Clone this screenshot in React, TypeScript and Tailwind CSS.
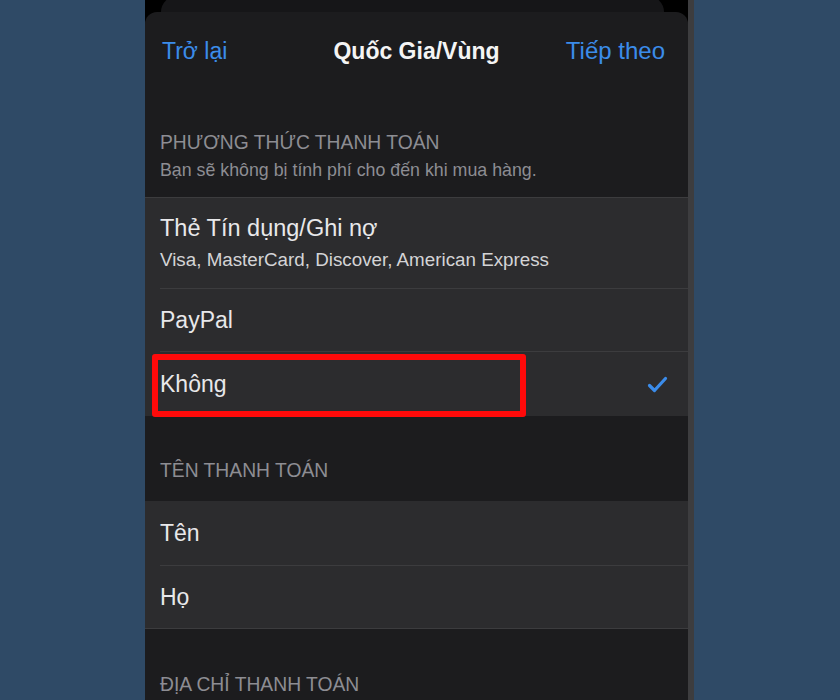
import React from 'react';

const font = { fontFamily: '"Liberation Sans", Arial, sans-serif' };

function Check(): React.ReactElement {
  return (
    <svg width="21" height="17" viewBox="0 0 21 17" fill="none">
      <path d="M2.5 9.5 L7.5 14.5 L18.5 2.5" stroke="#3b8cea" strokeWidth="3.2" strokeLinecap="round" strokeLinejoin="round" />
    </svg>
  );
}

interface RowProps {
  readonly label: string;
  readonly h: string;
  readonly last?: boolean;
  readonly children?: React.ReactNode;
}

function Row({ label, h, last, children }: RowProps): React.ReactElement {
  return (
    <div className="bg-[#2c2c2e] pl-[15px]">
      <div className={`flex items-center pr-[20px] ${h} ${last ? '' : 'border-b border-[#3c3c3e]'}`}>
        <span className="flex-1 text-[23px] leading-[28px] text-[#e8e8ea]">{label}</span>
        {children}
      </div>
    </div>
  );
}

export default function App(): React.ReactElement {
  return (
    <div className="w-full h-[700px] overflow-hidden bg-[#2f4a66]" style={font}>
      <div className="ml-[145px] w-[549px] h-[700px] flex">
        <div className="w-[543px] h-full bg-black flex flex-col">
          {/* stacked sheet peeking behind */}
          <div className="h-[12px] pl-[16px] pr-[24px]">
            <div className="h-[16px] -mt-[4px] rounded-t-[16px] bg-[#161618]" />
          </div>

          <div className="flex-1 rounded-t-[12px] bg-[#1c1c1e] flex flex-col">
            {/* nav bar */}
            <div className="h-[78px] flex items-center justify-between pl-[17px] pr-[23px] relative">
              <span className="text-[23px] text-[#3b8cea]">Trở lại</span>
              <span className="absolute left-1/2 -translate-x-1/2 text-[23px] font-bold text-[#f4f4f4]">Quốc Gia/Vùng</span>
              <span className="text-[24px] text-[#3b8cea]">Tiếp theo</span>
            </div>

            {/* section 1 header */}
            <div className="pl-[15px] pt-[41px] pb-[16px]">
              <div className="text-[19.3px] leading-[24px] text-[#8d8d93]">PHƯƠNG THỨC THANH TOÁN</div>
              <div className="mt-[4px] text-[17.8px] leading-[22px] text-[#8d8d93]">Bạn sẽ không bị tính phí cho đến khi mua hàng.</div>
            </div>

            {/* group 1 */}
            <div className="border-t border-[#3c3c3e]">
              <div className="bg-[#2c2c2e] pl-[15px]">
                <div className="h-[91px] pt-[16px] border-b border-[#3c3c3e]">
                  <div className="text-[23.5px] leading-[28px] text-[#e8e8ea]">Thẻ Tín dụng/Ghi nợ</div>
                  <div className="mt-[6px] text-[18.8px] leading-[24px] text-[#d4d4d6]">Visa, MasterCard, Discover, American Express</div>
                </div>
              </div>
              <Row label="PayPal" h="h-[63px]" />
              <div className="relative">
                <Row label="Không" h="h-[64px]" last>
                  <Check />
                </Row>
                {/* annotation box */}
                <div className="absolute left-[7px] top-[2px] w-[374px] h-[63px] border-[6px] border-[#ff0a0a] rounded-[3px]" />
              </div>
            </div>

            {/* section 2 header */}
            <div className="pl-[15px] pt-[43px] pb-[18px]">
              <div className="text-[19.3px] leading-[24px] text-[#8d8d93]">TÊN THANH TOÁN</div>
            </div>

            {/* group 2 */}
            <div className="border-b border-[#3c3c3e]">
              <Row label="Tên" h="h-[65px]" />
              <Row label="Họ" h="h-[62px]" last />
            </div>

            {/* section 3 header */}
            <div className="pl-[15px] pt-[44px]">
              <div className="text-[19.3px] leading-[24px] text-[#8d8d93]">ĐỊA CHỈ THANH TOÁN</div>
            </div>
          </div>
        </div>
        <div className="w-[6px] h-full bg-[#3d3d3f]" />
      </div>
    </div>
  );
}
